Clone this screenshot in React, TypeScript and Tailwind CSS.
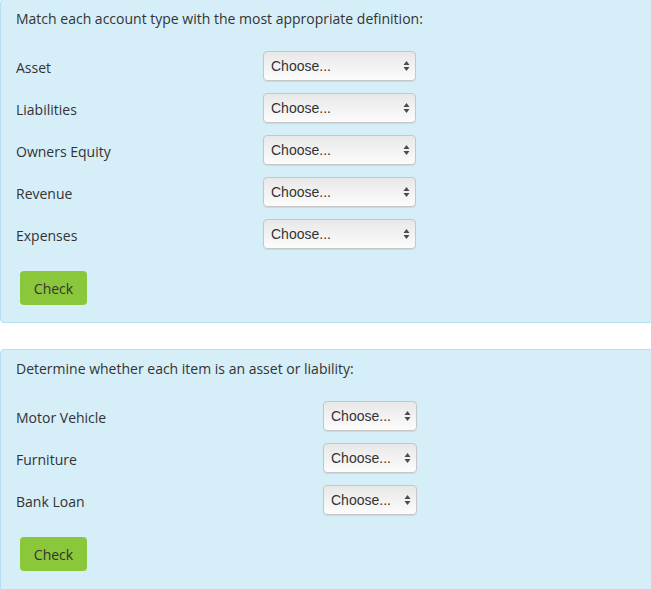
import React from "react"

type Quiz = {
  prompt: string
  items: string[]
  rowWidth: string
  selectWidth: string
}

const quizzes: Quiz[] = [
  {
    prompt: "Match each account type with the most appropriate definition:",
    items: ["Asset", "Liabilities", "Owners Equity", "Revenue", "Expenses"],
    rowWidth: "w-[400px]",
    selectWidth: "w-[153px]",
  },
  {
    prompt: "Determine whether each item is an asset or liability:",
    items: ["Motor Vehicle", "Furniture", "Bank Loan"],
    rowWidth: "w-[401px]",
    selectWidth: "w-[94px]",
  },
]

function Arrows() {
  return (
    <svg width="7" height="11" viewBox="0 0 7 11" className="pointer-events-none absolute right-[6px] top-1/2 -translate-y-1/2">
      <path d="M3.5 0.5 L6.5 4.5 L0.5 4.5 Z" fill="#4a4a4a" />
      <path d="M3.5 10.5 L6.5 6.5 L0.5 6.5 Z" fill="#4a4a4a" />
    </svg>
  )
}

function ChooseSelect({ width }: { width: string }) {
  return (
    <div className={`relative ${width}`}>
      <select
        defaultValue=""
        className="h-[30px] w-full appearance-none rounded-[4px] border border-[#c6c6c6] bg-gradient-to-b from-[#e8e8e8] to-[#fcfcfc] pl-[7px] pr-5 font-['Liberation_Sans',Arial,sans-serif] text-[14px] text-[#333] shadow-[0_1px_1px_rgba(0,0,0,0.08)] outline-none"
      >
        <option value="">Choose...</option>
        <option value="a">Asset</option>
        <option value="l">Liability</option>
      </select>
      <Arrows />
    </div>
  )
}

function QuizPanel({ quiz, first }: { quiz: Quiz; first?: boolean }) {
  return (
    <div
      className={`mr-[-12px] rounded-[4px] border border-[#b3e1f1] bg-[#d6eef8] pl-[15px] pt-[9px] ${first ? "-mt-px pb-[17px]" : "pb-[40px]"}`}
    >
      <p className="text-[14px] leading-[20px] text-[#333]">{quiz.prompt}</p>
      <div className={`mt-[22px] flex flex-col gap-[12px] ${quiz.rowWidth}`}>
        {quiz.items.map((item) => (
          <div key={item} className="flex h-[30px] items-center justify-between">
            <span className="pt-[3px] text-[14px] leading-[20px] text-[#333]">{item}</span>
            <ChooseSelect width={quiz.selectWidth} />
          </div>
        ))}
      </div>
      <button
        type="button"
        className="ml-[4px] mt-[22px] h-[34px] w-[67px] rounded-[4px] bg-[#8bc73a] text-[14px] text-[#333]"
      >
        Check
      </button>
    </div>
  )
}

export default function App() {
  return (
    <div className="h-[589px] w-[651px] overflow-hidden bg-white font-['Open_Sans','Noto_Sans',sans-serif]">
      <QuizPanel quiz={quizzes[0]} first />
      <div className="h-[26px]" />
      <QuizPanel quiz={quizzes[1]} />
    </div>
  )
}
